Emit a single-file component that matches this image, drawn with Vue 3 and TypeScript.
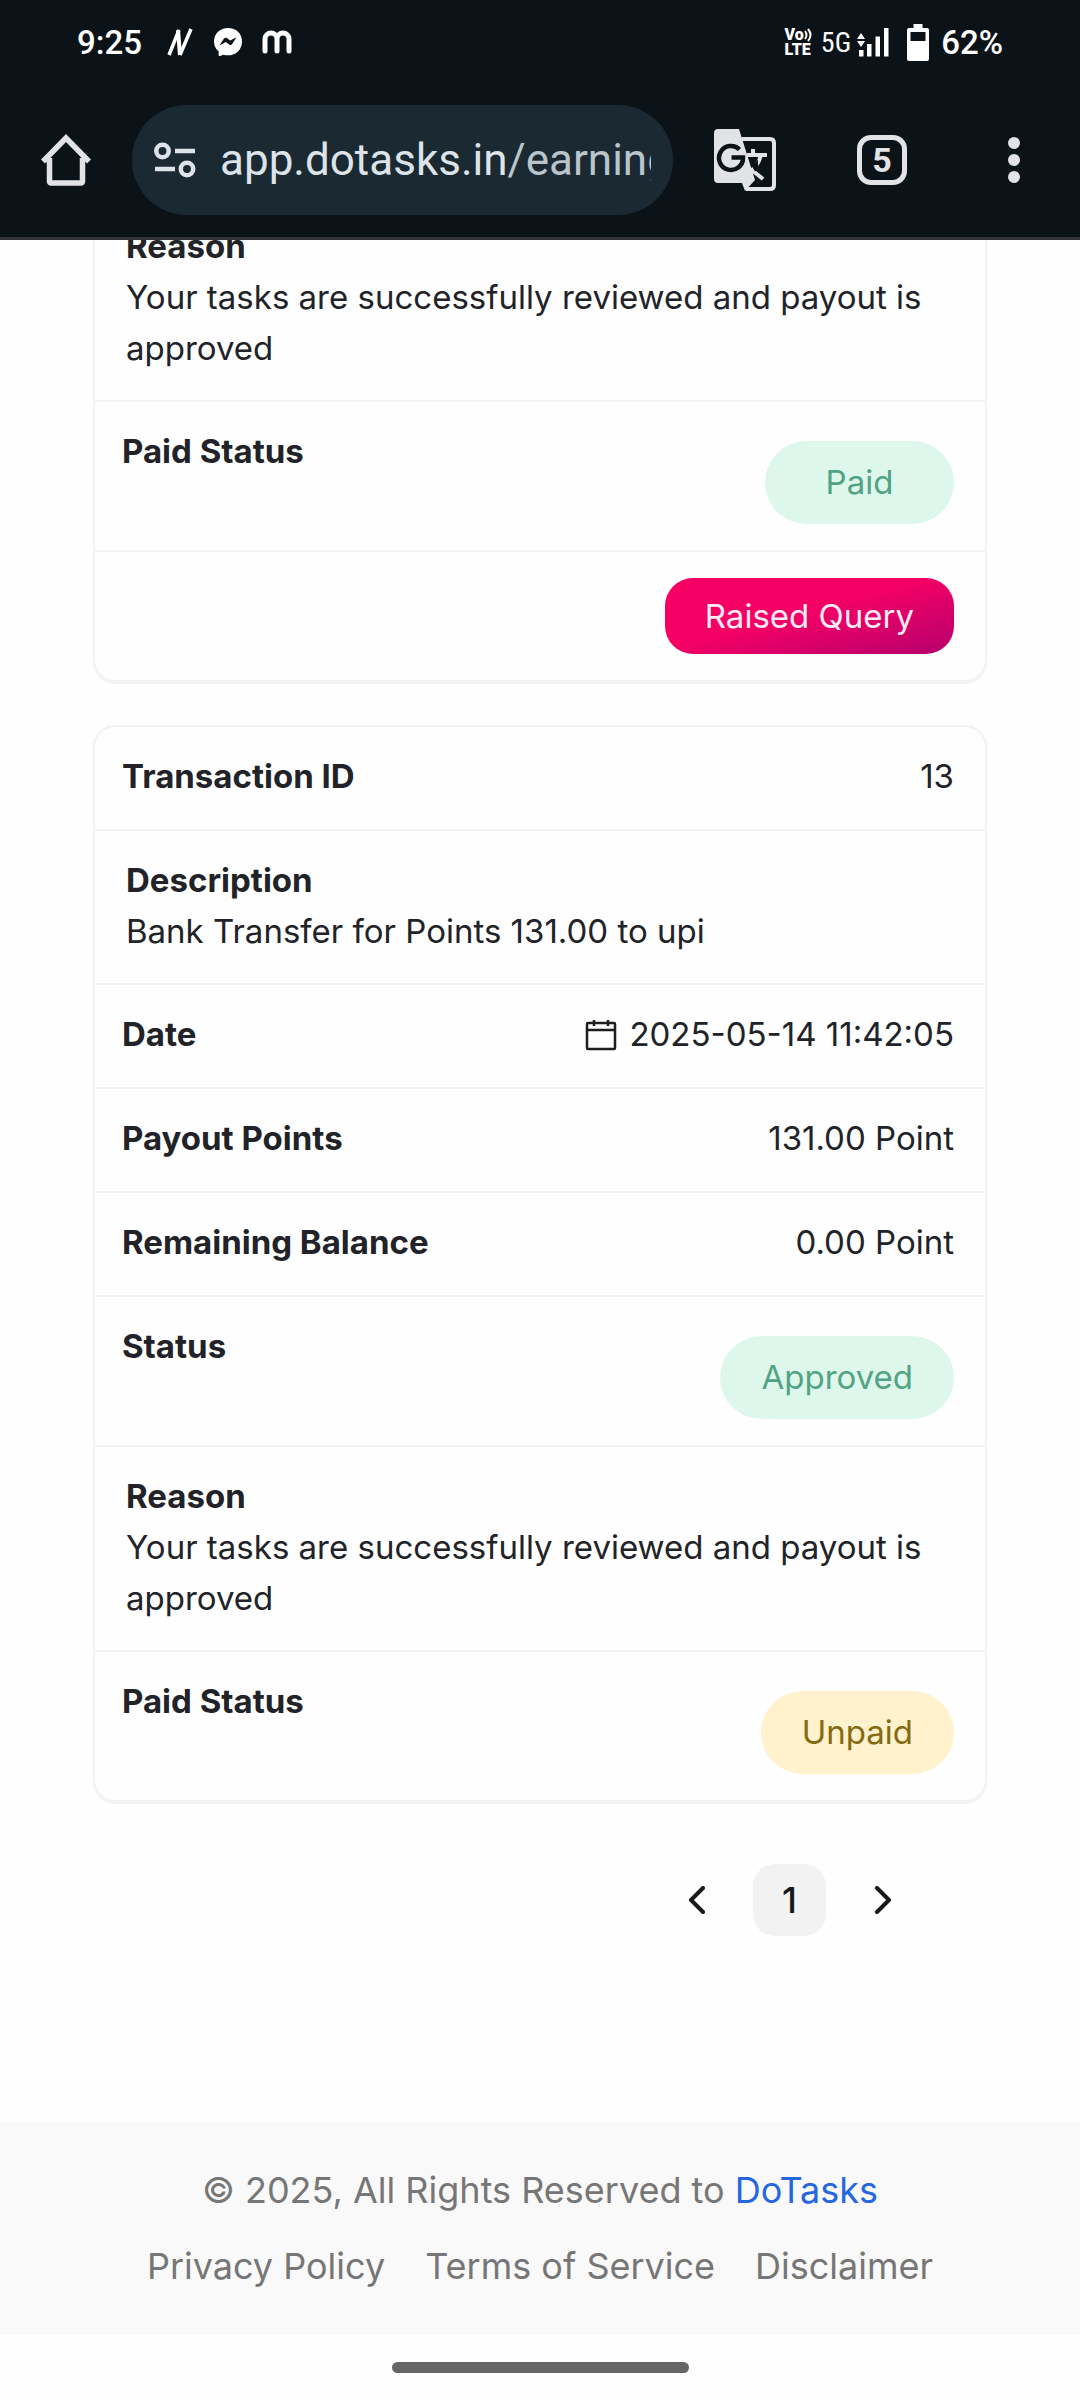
<script setup lang="ts">
interface Row {
  kind: 'inline' | 'block' | 'state' | 'date' | 'action'
  label?: string
  value: string
  tone?: 'success' | 'warning'
}

interface Transaction {
  id: number
  rows: Row[]
}

const approvedReason = 'Your tasks are successfully reviewed and payout is approved'

const transactions: Transaction[] = [
  {
    id: 12,
    rows: [
      { kind: 'block', label: 'Reason', value: approvedReason },
      { kind: 'state', label: 'Paid Status', value: 'Paid', tone: 'success' },
      { kind: 'action', value: 'Raised Query' },
    ],
  },
  {
    id: 13,
    rows: [
      { kind: 'inline', label: 'Transaction ID', value: '13' },
      { kind: 'block', label: 'Description', value: 'Bank Transfer for Points 131.00 to upi' },
      { kind: 'date', label: 'Date', value: '2025-05-14 11:42:05' },
      { kind: 'inline', label: 'Payout Points', value: '131.00 Point' },
      { kind: 'inline', label: 'Remaining Balance', value: '0.00 Point' },
      { kind: 'state', label: 'Status', value: 'Approved', tone: 'success' },
      { kind: 'block', label: 'Reason', value: approvedReason },
      { kind: 'state', label: 'Paid Status', value: 'Unpaid', tone: 'warning' },
    ],
  },
]

const footerLinks: string[] = ['Privacy Policy', 'Terms of Service', 'Disclaimer']
</script>

<template>
  <div class="screen">
    <header class="chrome">
      <div class="status">
        <div class="status-side">
          <span class="clock">9:25</span>
          <svg class="ic-n" width="26" height="28" viewBox="0 0 26 28" fill="none" stroke="#fff" stroke-linecap="butt" stroke-linejoin="round" aria-hidden="true">
            <path d="M2 27 L12 2" stroke-width="3.5" />
            <path d="M11 2 L13 27" stroke-width="4" />
            <path d="M13 27 L24 1" stroke-width="3.5" />
          </svg>
          <svg class="ic-msg" width="30" height="30" viewBox="0 0 30 30" aria-hidden="true">
            <path fill="#fff" d="M15 1C7 1 1 6.800 1 14.400c0 4 1.700 7.500 4.600 9.900V28c0 .8.7 1.300 1.500 1l3.200-1.300c1.500.4 3 .6 4.700.6 8 0 14-5.800 14-13.900S23 1 15 1z" />
            <path fill="#0c1318" d="M6.500 18.500l4.300-6.800c.7-1.100 2.100-1.300 3.100-.6l3.300 2.500 6.300-3.400-4.300 6.700c-.7 1.100-2.100 1.400-3.200.6l-3.200-2.400z" />
          </svg>
          <svg class="ic-m" width="30" height="24" viewBox="0 0 30 24" fill="none" stroke="#fff" stroke-width="5" stroke-linecap="round" aria-hidden="true">
            <path d="M3 21V9a6 6 0 0 1 12 0v12M15 9a6 6 0 0 1 12 0v12" />
          </svg>
        </div>
        <div class="status-side">
          <div class="volte">
            <span class="vo">Vo<svg width="9" height="14" viewBox="0 0 9 14" fill="none" stroke="#fff" stroke-width="2" aria-hidden="true"><path d="M1 3q3 4 0 8M4 1q5 6 0 12" /></svg></span>
            <span>LTE</span>
          </div>
          <span class="net">5G</span>
          <svg class="ic-signal" width="32" height="29" viewBox="0 0 32 29" fill="#fff" aria-hidden="true">
            <path d="M4 5l4 6H0zM4 19l4-6H0z" />
            <path d="M2 22h4.500v6.500H2zM10 16h4.500v12.500H10zM18.500 8.500H23v20h-4.500zM27 0h4.500v28.500H27z" />
          </svg>
          <svg class="ic-battery" width="22" height="37" viewBox="0 0 22 37" aria-hidden="true">
            <path fill="#fff" d="M6.500 0h9v4H20q2 0 2 2v29q0 2-2 2H2q-2 0-2-2V6q0-2 2-2h4.500z" />
            <path fill="#0c1318" d="M3.500 8h15v9h-15z" />
          </svg>
          <span class="clock">62%</span>
        </div>
      </div>

      <nav class="toolbar" aria-label="Browser">
        <button class="tool" type="button" aria-label="Home">
          <svg width="50" height="52" viewBox="0 0 50 52" fill="none" stroke="#e1e3e6" stroke-width="5.500" stroke-linejoin="round" aria-hidden="true">
            <path d="M2 27.500L25 4l23 23.500" stroke-linejoin="miter" />
            <path d="M8.500 24v23q0 2 2 2h29q2 0 2-2V24" />
          </svg>
        </button>
        <button class="address" type="button">
          <svg width="42" height="36" viewBox="0 0 42 36" fill="none" stroke="#dde3e8" stroke-width="4.500" aria-hidden="true">
            <circle cx="8.500" cy="9" r="6.200" />
            <circle cx="33" cy="27" r="6.200" />
            <path d="M21 9h20M1 27h20" />
          </svg>
          <span class="url">app.dotasks.in<span class="path">/earnings</span></span>
        </button>
        <button class="tool translate" type="button" aria-label="Translate">
          <svg width="62" height="64" viewBox="0 0 62 64" aria-hidden="true">
            <path d="M28 11h28q4 0 4 4v42q0 4-4 4H32" fill="none" stroke="#e1e3e6" stroke-width="4" />
            <path d="M33 27h20M39 21v6M47 27q-3 12-14 19" fill="none" stroke="#e1e3e6" stroke-width="4" />
            <path d="M4 1h21l16 51-10 11-3-8H4q-4 0-4-4V5q0-4 4-4z" fill="#e1e3e6" />
            <path d="M39 43l10 8" fill="none" stroke="#e1e3e6" stroke-width="4" />
            <path d="M25.500 21.500a12 12 0 1 0 3.500 8H17.500" fill="none" stroke="#0c1318" stroke-width="4.500" />
            <path d="M34.500 29h7l-3.500 6zM38 38.500l6-7v9l-3 3z" fill="#0c1318" />
          </svg>
        </button>
        <button class="tool tabs" type="button" aria-label="Open tabs">5</button>
        <button class="tool more" type="button" aria-label="More">
          <svg width="12" height="46" viewBox="0 0 12 46" fill="#e1e3e6" aria-hidden="true">
            <circle cx="6" cy="6" r="6" /><circle cx="6" cy="23" r="6" /><circle cx="6" cy="40" r="6" />
          </svg>
        </button>
      </nav>
    </header>

    <main class="content">
      <dl v-for="item in transactions" :key="item.id" class="card">
        <div v-for="(row, index) in item.rows" :key="index" class="row" :class="row.kind">
          <dt v-if="row.label">{{ row.label }}</dt>
          <dd>
            <svg v-if="row.kind === 'date'" width="32" height="32" viewBox="0 0 32 32" fill="none" stroke="#1d1e20" stroke-width="2.5" aria-hidden="true">
              <rect x="2" y="4" width="28" height="26" rx="1" />
              <path d="M2 11h28M9 1v6M23 1v6" />
            </svg>
            <span v-if="row.kind === 'state'" class="badge" :class="row.tone">{{ row.value }}</span>
            <button v-else-if="row.kind === 'action'" class="query" type="button">{{ row.value }}</button>
            <template v-else>{{ row.value }}</template>
          </dd>
        </div>
      </dl>

      <nav class="pager" aria-label="Pagination">
        <button type="button" aria-label="Previous page">
          <svg width="18" height="28" viewBox="0 0 18 28" aria-hidden="true"><path d="M15 2L3 14l12 12" /></svg>
        </button>
        <button type="button" class="current" aria-current="page">1</button>
        <button type="button" aria-label="Next page">
          <svg width="18" height="28" viewBox="0 0 18 28" aria-hidden="true"><path d="M3 2l12 12L3 26" /></svg>
        </button>
      </nav>
    </main>

    <footer class="footer">
      <p>© 2025, All Rights Reserved to <a class="brand" href="#">DoTasks</a></p>
      <nav class="links" aria-label="Footer">
        <a v-for="link in footerLinks" :key="link" href="#">{{ link }}</a>
      </nav>
    </footer>

    <div class="gesture"><span></span></div>
  </div>
</template>

<style>
body {
  background: #fefefe;
}
</style>

<style scoped>
.screen {
  font-family: Inter, sans-serif;
  font-size: 33px;
  line-height: 51px;
  color: #212328;
}

button {
  border: 0;
  padding: 0;
  background: none;
  font: inherit;
  color: inherit;
}

svg {
  display: block;
  flex: none;
}

.chrome {
  background: #0c1318;
  border-bottom: 3px solid #303439;
  color: #fff;
}

.status {
  display: flex;
  justify-content: space-between;
  height: 84px;
  padding: 0 77px;
}

.status-side {
  display: flex;
  align-items: center;
}

.clock {
  font-family: Roboto, sans-serif;
  font-size: 33px;
  font-weight: 500;
}

.ic-n {
  margin-left: 25px;
}

.ic-msg {
  margin-left: 20px;
}

.ic-m {
  margin-left: 19px;
}

.volte {
  font-family: Roboto, sans-serif;
  font-size: 16px;
  font-weight: 900;
  line-height: 15px;
  display: flex;
  flex-direction: column;
}

.vo {
  display: flex;
  align-items: center;
}

.net {
  margin-left: 8px;
  font-family: "Roboto Condensed", "Liberation Sans Narrow", Roboto, sans-serif;
  font-size: 28px;
}

.ic-signal {
  margin-left: 6px;
}

.ic-battery {
  margin: 0 12px 0 18px;
}

.toolbar {
  display: flex;
  align-items: center;
  padding: 21px 60px 22px 41px;
}

.address {
  flex: 1;
  min-width: 0;
  height: 110px;
  margin: 0 41px;
  padding: 0 22px;
  border-radius: 55px;
  background: #1b2932;
  display: flex;
  align-items: center;
  gap: 24px;
}

.url {
  flex: 1;
  min-width: 0;
  overflow: hidden;
  white-space: nowrap;
  text-align: left;
  font-family: Roboto, sans-serif;
  font-size: 44px;
  line-height: 60px;
  color: #dde3e8;
}

.path {
  color: #b9c4cb;
}

.tabs {
  box-sizing: border-box;
  width: 50px;
  height: 50px;
  margin: 0 101px 0 81px;
  border: 5px solid #e1e3e6;
  border-radius: 14px;
  font-family: Roboto, sans-serif;
  font-size: 34px;
  font-weight: 700;
  line-height: 40px;
  color: #e1e3e6;
}

.content {
  overflow: hidden;
  padding: 0 93px 186px;
}

.card {
  margin: 0 0 43px;
  border: 2px solid #f2f2f3;
  border-radius: 22px;
  box-shadow: 0 2px 0 #f2f2f3;
}

/* The list is scrolled, so the first card continues above the viewport. */
.card:first-child {
  margin-top: -45px;
}

.row {
  display: flex;
  justify-content: space-between;
  padding: 24px 31px 27px 27px;
  border-bottom: 2px solid #f2f2f3;
}

.row:last-child {
  border-bottom: 0;
}

.row.block {
  display: block;
  padding-bottom: 26px;
  padding-left: 31px;
}

.row.state {
  padding-bottom: 26px;
}

.row.action {
  justify-content: flex-end;
  padding: 26px 31px;
}

dt {
  font-weight: 700;
}

dd {
  display: flex;
  align-items: center;
  gap: 12px;
  margin: 0;
}

.badge {
  box-sizing: border-box;
  min-width: 189px;
  margin-top: 15px;
  padding: 16px 41px;
  border-radius: 42px;
  text-align: center;
}

.success {
  background: #def7ec;
  color: #52a384;
}

.warning {
  background: #fff2cd;
  color: #856a12;
}

.query {
  height: 76px;
  padding: 0 40px;
  border-radius: 28px;
  background: linear-gradient(165deg, #f50065 45%, #b5006d 100%);
  color: #ffeaf6;
}

.pager {
  display: flex;
  justify-content: flex-end;
  gap: 20px;
  margin-top: 62px;
  padding-right: 68px;
}

.pager button {
  display: flex;
  align-items: center;
  justify-content: center;
  width: 73px;
  height: 72px;
  border-radius: 22px;
  font-size: 36px;
  font-weight: 500;
  color: #18191b;
}

.pager path {
  fill: none;
  stroke: #18191b;
  stroke-width: 4px;
  stroke-linecap: round;
  stroke-linejoin: round;
}

.pager .current {
  background: #f2f2f2;
}

.footer {
  padding: 41px 32px 42px;
  background: #f9f9f9;
  font-size: 36px;
  line-height: 54px;
  text-align: center;
  color: #767676;
}

.footer p {
  margin: 0 0 22px;
}

.footer a {
  color: inherit;
  text-decoration: none;
}

.footer .brand {
  color: #2467e0;
}

.links {
  display: flex;
  justify-content: center;
  gap: 40px;
}

.gesture {
  display: flex;
  justify-content: center;
  padding: 27px 0;
}

.gesture span {
  width: 297px;
  height: 11px;
  border-radius: 6px;
  background: #666;
}
</style>
